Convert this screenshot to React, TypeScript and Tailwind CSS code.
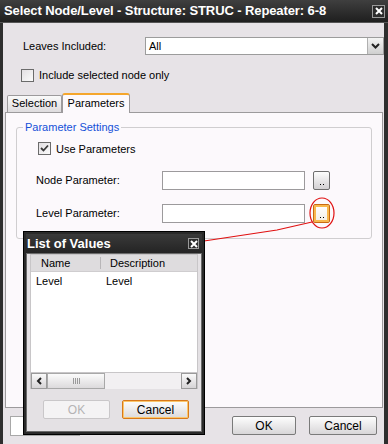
import React from "react";

const ui = { fontFamily: '"Liberation Sans", Arial, sans-serif' };

function Check({ checked }: { checked?: boolean }) {
  return (
    <div className="w-[13px] h-[13px] border border-[#6b6b6b] bg-gradient-to-br from-[#e2dfe2] to-[#fbfbfb] flex items-center justify-center">
      {checked && (
        <svg width="9" height="9" viewBox="0 0 9 9">
          <path d="M1 4 L3.5 6.5 L8 1.5" stroke="#3a3a3a" strokeWidth="1.8" fill="none" />
        </svg>
      )}
    </div>
  );
}

function CloseBox({ size = 12 }: { size?: number }) {
  return (
    <div
      className="border border-[#9a9a9a] bg-[#2c2c2c] flex items-center justify-center"
      style={{ width: size, height: size }}
    >
      <svg width="8" height="8" viewBox="0 0 8 8">
        <path d="M1 1 L7 7 M7 1 L1 7" stroke="#fff" strokeWidth="2" />
      </svg>
    </div>
  );
}

function Btn({ label, w, hot, disabled }: { label: string; w: number; hot?: boolean; disabled?: boolean }) {
  return (
    <div
      className={`h-[19px] flex items-center justify-center text-[12px] rounded-[2px] border ${
        disabled
          ? "border-[#c9c7c9] bg-[#f4f3f4] text-[#b5b3b5]"
          : hot
          ? "border-[#d9791a] bg-gradient-to-b from-[#fdfdfd] to-[#dcdadc] text-black shadow-[inset_0_0_0_1px_#fbc76c]"
          : "border-[#7a7a7a] bg-gradient-to-b from-[#fdfdfd] to-[#d8d6d8] text-black"
      }`}
      style={{ width: w }}
    >
      {label}
    </div>
  );
}

function Dots({ hot }: { hot?: boolean }) {
  return (
    <div
      className={`w-[17px] h-[19px] rounded-[2px] border flex items-end justify-center pb-[4px] ${
        hot
          ? "border-[#c96a12] bg-gradient-to-b from-[#ffffff] to-[#f2ede4] shadow-[inset_0_0_0_2px_#f8b84e]"
          : "border-[#6e6e6e] bg-gradient-to-b from-[#fdfdfd] to-[#d2d0d2]"
      }`}
    >
      <div className="flex gap-[2px]">
        <div className="w-px h-px bg-black" />
        <div className="w-px h-px bg-black" />
      </div>
    </div>
  );
}

export default function App() {
  return (
    <div className="relative w-[388px] h-[444px] bg-[#2e2e2e] overflow-hidden text-black text-[11px]" style={ui}>
      {/* title bar */}
      <div className="h-[23px] bg-gradient-to-b from-[#3f3f3f] to-[#1f1f1f] flex items-center justify-between pl-[4px] pr-[3px] border-b border-[#555]">
        <span className="text-white font-bold text-[13px] tracking-[-0.1px]">
          Select Node/Level - Structure: STRUC - Repeater: 6-8
        </span>
        <CloseBox size={13} />
      </div>

      {/* body */}
      <div className="h-[421px] bg-[#e7e3e7] ml-[3px] mr-[4px] mb-[3px] flex flex-col">
        <div className="flex items-center mt-[14px] h-[18px]">
          <span className="ml-[20px] w-[122px]">Leaves Included:</span>
          <div className="flex-1 h-[18px] bg-white border border-[#9c9c9c] flex items-center">
            <span className="ml-[3px] flex-1">All</span>
            <div className="w-[16px] h-[16px] border-l border-[#b0b0b0] bg-gradient-to-b from-[#f4f4f4] to-[#cfcfcf] flex items-center justify-center">
              <svg width="9" height="6" viewBox="0 0 9 6">
                <path d="M1 1 L4.5 4.5 L8 1" stroke="#222" strokeWidth="2" fill="none" />
              </svg>
            </div>
          </div>
        </div>

        <div className="flex items-center gap-[5px] mt-[12px] ml-[18px]">
          <Check />
          <span>Include selected node only</span>
        </div>

        {/* tabs */}
        <div className="flex items-end mt-[8px] ml-[4px] h-[20px]">
          <div className="h-[17px] w-[55px] border border-b-0 border-[#9c9a9c] rounded-t-[2px] bg-gradient-to-b from-[#fafafa] to-[#dedcde] flex items-center justify-center">
            Selection
          </div>
          <div className="h-[20px] w-[68px] border border-b-0 border-[#9c9a9c] border-t-2 border-t-[#f5a62c] rounded-t-[3px] bg-[#fcf9fc] flex items-center justify-center -mb-px relative z-10">
            Parameters
          </div>
        </div>

        {/* panel */}
        <div className="ml-[2px] mr-[1px] h-[296px] bg-[#fcf9fc] border border-[#9c9a9c] pt-[14px] px-[10px]">
          <div className="relative h-[112px] border border-[#d0ced0] rounded-[3px]">
            <span className="absolute -top-[8px] left-[6px] bg-[#fcf9fc] px-[2px] text-[#1450d8] leading-[14px]">
              Parameter Settings
            </span>
            <div className="flex items-center gap-[5px] ml-[21px] mt-[13px]">
              <Check checked />
              <span>Use Parameters</span>
            </div>
            <div className="flex items-center mt-[14px] ml-[19px]">
              <span className="w-[126px]">Node Parameter:</span>
              <div className="w-[143px] h-[19px] bg-white border border-[#9c9a9c]" />
              <div className="ml-[8px]">
                <Dots />
              </div>
            </div>
            <div className="flex items-center mt-[14px] ml-[19px]">
              <span className="w-[126px]">Level Parameter:</span>
              <div className="w-[143px] h-[19px] bg-white border border-[#9c9a9c]" />
              <div className="ml-[8px]">
                <Dots hot />
              </div>
            </div>
          </div>
        </div>

        {/* bottom buttons */}
        <div className="flex items-center mt-[8px] px-[7px] gap-[13px]">
          <div className="w-[70px] h-[20px] bg-white border border-[#a8a8a8]" />
          <div className="flex-1" />
          <Btn label="OK" w={64} />
          <Btn label="Cancel" w={68} />
        </div>
      </div>

      {/* annotation */}
      <svg className="absolute left-0 top-0 pointer-events-none" width="388" height="444">
        <ellipse cx="322" cy="213" rx="12" ry="15" stroke="#e01010" strokeWidth="1.2" fill="none" />
        <path d="M204 241 L277 230 L312 222" stroke="#e01010" strokeWidth="1.2" fill="none" />
      </svg>

      {/* List of Values popup */}
      <div className="absolute left-[23px] top-[231px] w-[182px] h-[204px] bg-[#2a2a2a] border border-black p-[2px] flex flex-col">
        <div className="h-[19px] flex items-center justify-between pl-[1px] pr-[3px] bg-gradient-to-b from-[#3a3a3a] to-[#242424]">
          <span className="text-white font-bold text-[13px]">List of Values</span>
          <CloseBox size={11} />
        </div>
        <div className="flex-1 bg-[#e4e1e4] border border-[#6a6a6a] flex flex-col">
          <div className="mx-[3px] h-[119px] bg-white border border-[#c8c6c8] flex flex-col">
            <div className="h-[17px] bg-[#dedcde] flex items-center border-b border-[#cfcdcf]">
              <span className="ml-[10px] w-[59px]">Name</span>
              <div className="w-px h-[12px] bg-[#b8b6b8]" />
              <span className="ml-[9px]">Description</span>
            </div>
            <div className="flex items-center h-[16px] mt-[1px]">
              <span className="ml-[5px] w-[70px]">Level</span>
              <span>Level</span>
            </div>
            <div className="flex-1" />
          </div>
          <div className="mx-[3px] h-[16px] flex bg-[#f2f0f2] border-x border-[#c8c6c8]">
            <div className="w-[16px] h-[16px] border border-[#9a9a9a] bg-gradient-to-b from-[#fafafa] to-[#d6d4d6] flex items-center justify-center">
              <svg width="6" height="8" viewBox="0 0 6 8"><path d="M5 1 L2 4 L5 7" stroke="#222" strokeWidth="2" fill="none" /></svg>
            </div>
            <div className="w-[58px] h-[16px] border border-[#a8a8a8] bg-gradient-to-b from-[#fbfbfb] to-[#dcdadc] flex items-center justify-center gap-[1px]">
              <div className="w-px h-[6px] bg-[#9a9a9a]" />
              <div className="w-px h-[6px] bg-[#9a9a9a]" />
              <div className="w-px h-[6px] bg-[#9a9a9a]" />
              <div className="w-px h-[6px] bg-[#9a9a9a]" />
            </div>
            <div className="flex-1" />
            <div className="w-[16px] h-[16px] border border-[#9a9a9a] bg-gradient-to-b from-[#fafafa] to-[#d6d4d6] flex items-center justify-center">
              <svg width="6" height="8" viewBox="0 0 6 8"><path d="M1 1 L4 4 L1 7" stroke="#222" strokeWidth="2" fill="none" /></svg>
            </div>
          </div>
          <div className="flex items-center mt-[11px] ml-[16px] gap-[12px]">
            <Btn label="OK" w={67} disabled />
            <Btn label="Cancel" w={67} hot />
          </div>
        </div>
      </div>
    </div>
  );
}
